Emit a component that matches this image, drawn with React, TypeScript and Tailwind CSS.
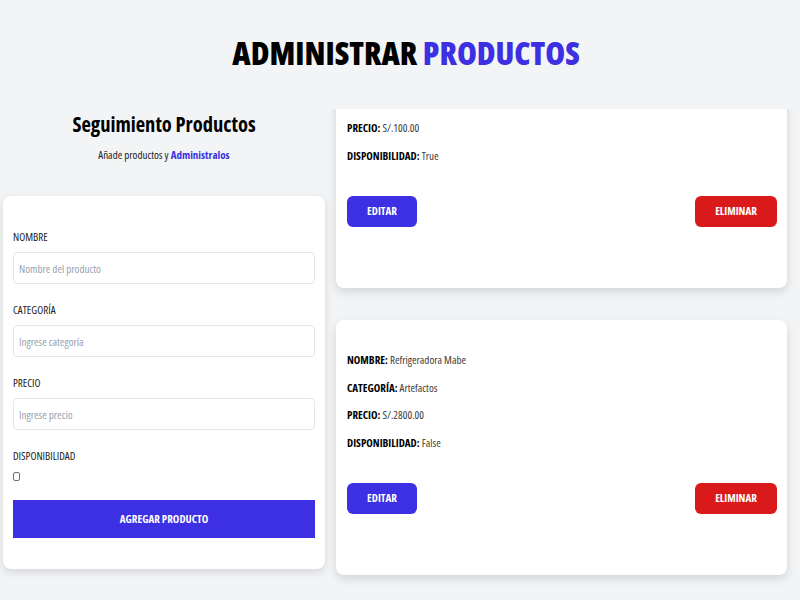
import { useLayoutEffect, useRef } from "react";

type Product = {
  nombre: string;
  categoria: string;
  precio: string;
  disponible: boolean;
};

const products: Product[] = [
  { nombre: "Lavadora LG", categoria: "Artefactos", precio: "100.00", disponible: true },
  { nombre: "Refrigeradora Mabe", categoria: "Artefactos", precio: "2800.00", disponible: false },
  { nombre: "Televisor Samsung", categoria: "Electrónica", precio: "1500.00", disponible: true },
];

const ProductCard = ({ product }: { product: Product }) => {
  return (
    <div className="shrink-0 bg-white rounded-lg shadow-[0_4px_10px_rgba(0,0,0,0.13)] pl-[11px] pr-[10px] pt-[26px] pb-[61px]">
      <div className="text-[11px] leading-[27.5px]">
        <p>
          <span className="font-bold text-black">NOMBRE:</span>{" "}
          <span className="text-[#3a3a3a]">{product.nombre}</span>
        </p>
        <p>
          <span className="font-bold text-black">CATEGORÍA:</span>{" "}
          <span className="text-[#3a3a3a]">{product.categoria}</span>
        </p>
        <p>
          <span className="font-bold text-black">PRECIO:</span>{" "}
          <span className="text-[#3a3a3a]">S/.{product.precio}</span>
        </p>
        <p>
          <span className="font-bold text-black">DISPONIBILIDAD:</span>{" "}
          <span className="text-[#3a3a3a]">{product.disponible ? "True" : "False"}</span>
        </p>
      </div>
      <div className="mt-[27px] flex justify-between">
        <button className="w-[70px] h-[31px] rounded-md bg-[#3c30e2] text-white font-bold text-[11px]">
          EDITAR
        </button>
        <button className="w-[82px] h-[31px] rounded-md bg-[#da1a1a] text-white font-bold text-[11px]">
          ELIMINAR
        </button>
      </div>
    </div>
  );
};

export default function App() {
  const listRef = useRef<HTMLDivElement>(null);

  // the list is scrolled a bit, first card shows only its lower half
  useLayoutEffect(() => {
    if (listRef.current) listRef.current.scrollTop = 76;
  }, []);

  return (
    <div className="w-[800px] h-[600px] overflow-hidden bg-gray-100 font-['Open_Sans',sans-serif] [font-stretch:75%] text-[#222]">
      <header className="h-[109px] pt-[35px] pl-3">
        <h1 className="text-center text-[32px] leading-[36px] font-extrabold text-black">
          ADMINISTRAR <span className="text-[#3c30e2]">PRODUCTOS</span>
        </h1>
      </header>

      <div className="flex">
        <div className="w-[330px] shrink-0 pl-[3px] pr-[5px]">
          <h2 className="mt-[3px] text-center text-[20.5px] leading-6 font-bold text-black">
            Seguimiento Productos
          </h2>
          <p className="mt-[11px] text-center text-[11px] leading-4 text-[#222]">
            Añade productos y{" "}
            <span className="font-bold text-[#3c30e2]">Administralos</span>
          </p>

          <form className="mt-[33px] bg-white rounded-lg shadow-[0_3px_8px_rgba(0,0,0,0.13)] px-[10px] pt-[33px] pb-[31px]">
            <label className="block text-[11px] leading-4">NOMBRE</label>
            <input
              className="mt-[7px] block w-full h-8 rounded border border-gray-200 pl-[5px] text-[11px] placeholder:text-gray-400 outline-none"
              placeholder="Nombre del producto"
            />
            <label className="mt-[18px] block text-[11px] leading-4">CATEGORÍA</label>
            <input
              className="mt-[7px] block w-full h-8 rounded border border-gray-200 pl-[5px] text-[11px] placeholder:text-gray-400 outline-none"
              placeholder="Ingrese categoría"
            />
            <label className="mt-[18px] block text-[11px] leading-4">PRECIO</label>
            <input
              className="mt-[7px] block w-full h-8 rounded border border-gray-200 pl-[5px] text-[11px] placeholder:text-gray-400 outline-none"
              placeholder="Ingrese precio"
            />
            <label className="mt-[18px] block text-[11px] leading-4">DISPONIBILIDAD</label>
            <input
              type="checkbox"
              className="mt-2 block appearance-none w-[7px] h-[9px] border border-gray-500 rounded-[2px] bg-white"
            />
            <button
              type="button"
              className="mt-[19px] block w-full h-[38px] bg-[#3c30e2] text-white font-bold text-[11px]"
            >
              AGREGAR PRODUCTO
            </button>
          </form>
        </div>

        <div
          ref={listRef}
          className="flex-1 h-[491px] overflow-y-auto flex flex-col gap-8 pl-[6px] pr-[13px] pb-6 [&::-webkit-scrollbar]:w-[3px] [&::-webkit-scrollbar-thumb]:bg-[#c6c6c6]"
        >
          {products.map((p) => (
            <ProductCard key={p.nombre} product={p} />
          ))}
        </div>
      </div>
    </div>
  );
}
